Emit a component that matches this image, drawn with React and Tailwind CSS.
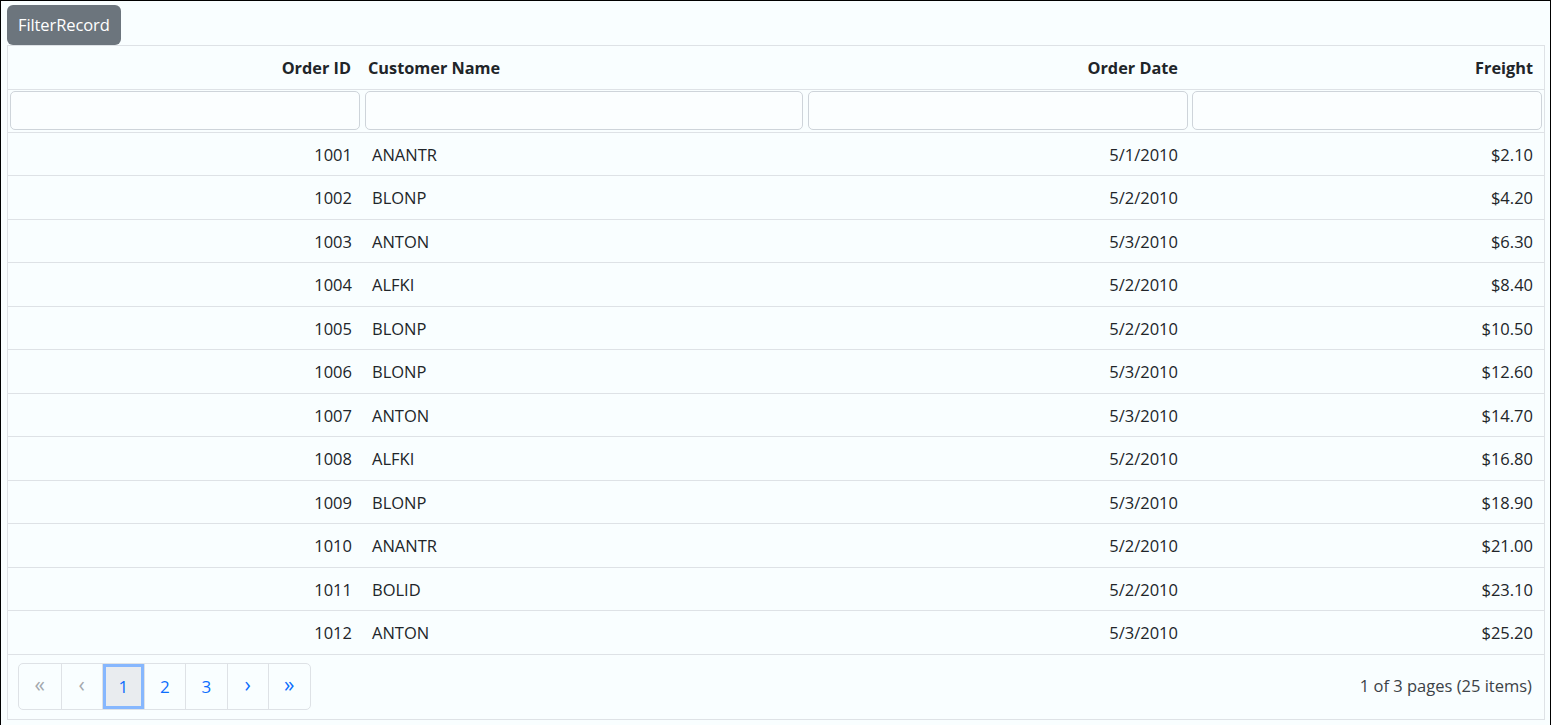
const rows = [
  [1001, "ANANTR", "5/1/2010", "$2.10"],
  [1002, "BLONP", "5/2/2010", "$4.20"],
  [1003, "ANTON", "5/3/2010", "$6.30"],
  [1004, "ALFKI", "5/2/2010", "$8.40"],
  [1005, "BLONP", "5/2/2010", "$10.50"],
  [1006, "BLONP", "5/3/2010", "$12.60"],
  [1007, "ANTON", "5/3/2010", "$14.70"],
  [1008, "ALFKI", "5/2/2010", "$16.80"],
  [1009, "BLONP", "5/3/2010", "$18.90"],
  [1010, "ANANTR", "5/2/2010", "$21.00"],
  [1011, "BOLID", "5/2/2010", "$23.10"],
  [1012, "ANTON", "5/3/2010", "$25.20"],
];

const pager = [
  { label: "«", state: "disabled", big: true },
  { label: "‹", state: "disabled", big: true },
  { label: "1", state: "active" },
  { label: "2", state: "link" },
  { label: "3", state: "link" },
  { label: "›", state: "link", big: true },
  { label: "»", state: "link", big: true },
];

const inputCls =
  "block h-[39px] w-full rounded-[5px] border border-[#ced4da] bg-[#fbfeff] outline-none";

export default function App() {
  return (
    <div
      className="h-[726px] border-x border-t border-black bg-[#f9feff] pl-[6px] pr-[5px] pt-[4px] text-[16.5px] text-[#212529]"
      style={{ fontFamily: '"Open Sans", "Noto Sans", sans-serif' }}
    >
      <button
        type="button"
        className="h-10 rounded-md bg-[#6c757d] px-[11px] text-[16.5px] tracking-[-0.1px] text-white"
      >
        FilterRecord
      </button>

      <div className="border border-[#dee2e6]">
        <table className="w-full table-fixed border-collapse">
          <colgroup>
            <col className="w-[354px]" />
            <col className="w-[444px]" />
            <col className="w-[384px]" />
            <col />
          </colgroup>
          <thead>
            <tr className="h-[43px] border-b border-[#dee2e6] text-[16.3px]">
              <th className="pt-[2px] pr-[11px] text-right font-bold">Order ID</th>
              <th className="pt-[2px] pl-[6px] text-left font-bold">Customer Name</th>
              <th className="pt-[2px] pr-[12px] text-right font-bold">Order Date</th>
              <th className="pt-[2px] pr-[11px] text-right font-bold">Freight</th>
            </tr>
            <tr className="h-[43px] border-b border-[#dee2e6]">
              <th className="px-[2px]">
                <input className={inputCls} />
              </th>
              <th className="px-[3px]">
                <input className={inputCls} />
              </th>
              <th className="px-[2px]">
                <input className={inputCls} />
              </th>
              <th className="px-[2px]">
                <input className={inputCls} />
              </th>
            </tr>
          </thead>
          <tbody>
            {rows.map((r) => (
              <tr key={r[0]} className="h-[43.5px] border-b border-[#dee2e6]">
                <td className="pt-[3px] pr-[10px] text-right">{r[0]}</td>
                <td className="pt-[3px] pl-[10px]">{r[1]}</td>
                <td className="pt-[3px] pr-[12px] text-right">{r[2]}</td>
                <td className="pt-[3px] pr-[11px] text-right">{r[3]}</td>
              </tr>
            ))}
          </tbody>
        </table>

        <div className="flex h-[64px] items-center justify-between pl-[10px] pr-[12px]">
          <div className="flex h-[47px] overflow-hidden rounded-[5px] border border-[#dee2e6]">
            {pager.map((p, i) => (
              <div
                key={i}
                className={
                  "flex w-[41.5px] items-center justify-center " +
                  (p.big ? "pb-[3px] text-[21px] " : "text-[17px] ") +
                  (i > 0 ? "border-l border-[#dee2e6] " : "") +
                  (p.state === "active"
                    ? "bg-[#e9ecef] text-[#0d6efd] shadow-[inset_0_0_0_3px_#86b7fe]"
                    : p.state === "disabled"
                    ? "text-[#a3a8ad]"
                    : "text-[#0d6efd]")
                }
              >
                {p.label}
              </div>
            ))}
          </div>
          <span className="text-[16.5px] text-[#3c4247]">1 of 3 pages (25 items)</span>
        </div>
      </div>
    </div>
  );
}
